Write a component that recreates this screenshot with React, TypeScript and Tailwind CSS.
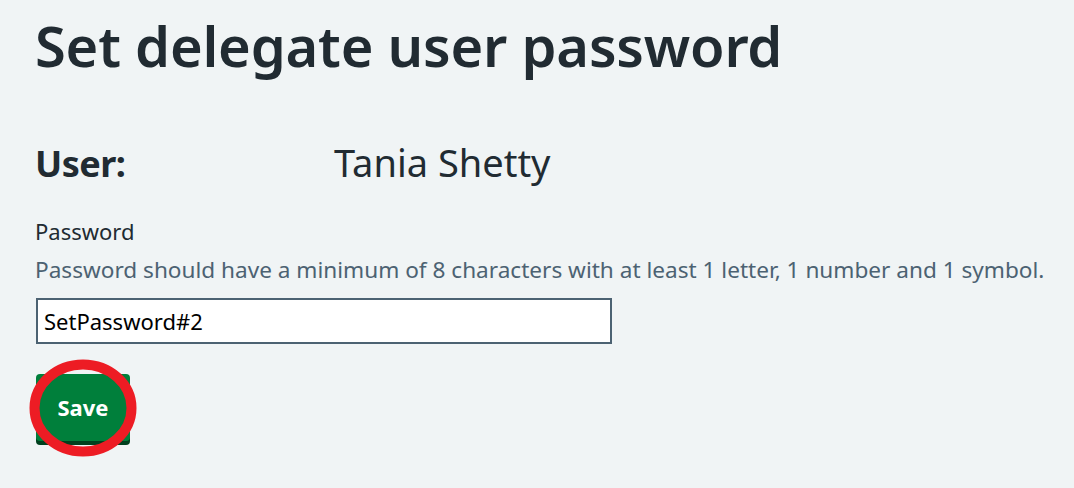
export default function App() {
  return (
    <div
      className="min-h-[488px] w-full bg-[#f0f4f5] text-[#212b32] pl-[35px] pt-[13px]"
      style={{ fontFamily: '"Noto Sans", "Open Sans", Arial, sans-serif' }}
    >
      <h1 className="text-[56px] font-semibold leading-[64px] tracking-[-0.2px]">Set delegate user password</h1>

      <div className="mt-[61px] flex items-baseline h-[48px] leading-[48px]">
        <span className="w-[299px] text-[36px] font-bold tracking-[-0.5px]">User:</span>
        <span className="text-[38px]">Tania Shetty</span>
      </div>

      <div className="mt-[31px]">
        <label className="block text-[22px] leading-[28px]">Password</label>
        <p className="text-[22.6px] leading-[28px] text-[#4c6272] mt-[11px]">
          Password should have a minimum of 8 characters with at least 1 letter, 1 number and 1 symbol.
        </p>
        <input
          type="text"
          defaultValue="SetPassword#2"
          className="mt-[14px] ml-[1px] block w-[576px] h-[46px] border-2 border-[#4c6272] bg-white px-[6px] text-[22px] text-black outline-none"
        />
      </div>

      <div className="relative mt-[30px] ml-[1px] w-fit">
        <button className="w-[94px] h-[67px] rounded-[4px] bg-[#007f3b] text-white text-[22px] font-bold shadow-[0_4px_0_#00401e]">
          Save
        </button>
        <svg className="absolute left-[-7px] top-[-15px] pointer-events-none" width="108" height="98" viewBox="0 0 108 98">
          <ellipse cx="54" cy="49" rx="48.5" ry="43.5" fill="none" stroke="#ed1c24" strokeWidth="10" />
        </svg>
      </div>
    </div>
  );
}
